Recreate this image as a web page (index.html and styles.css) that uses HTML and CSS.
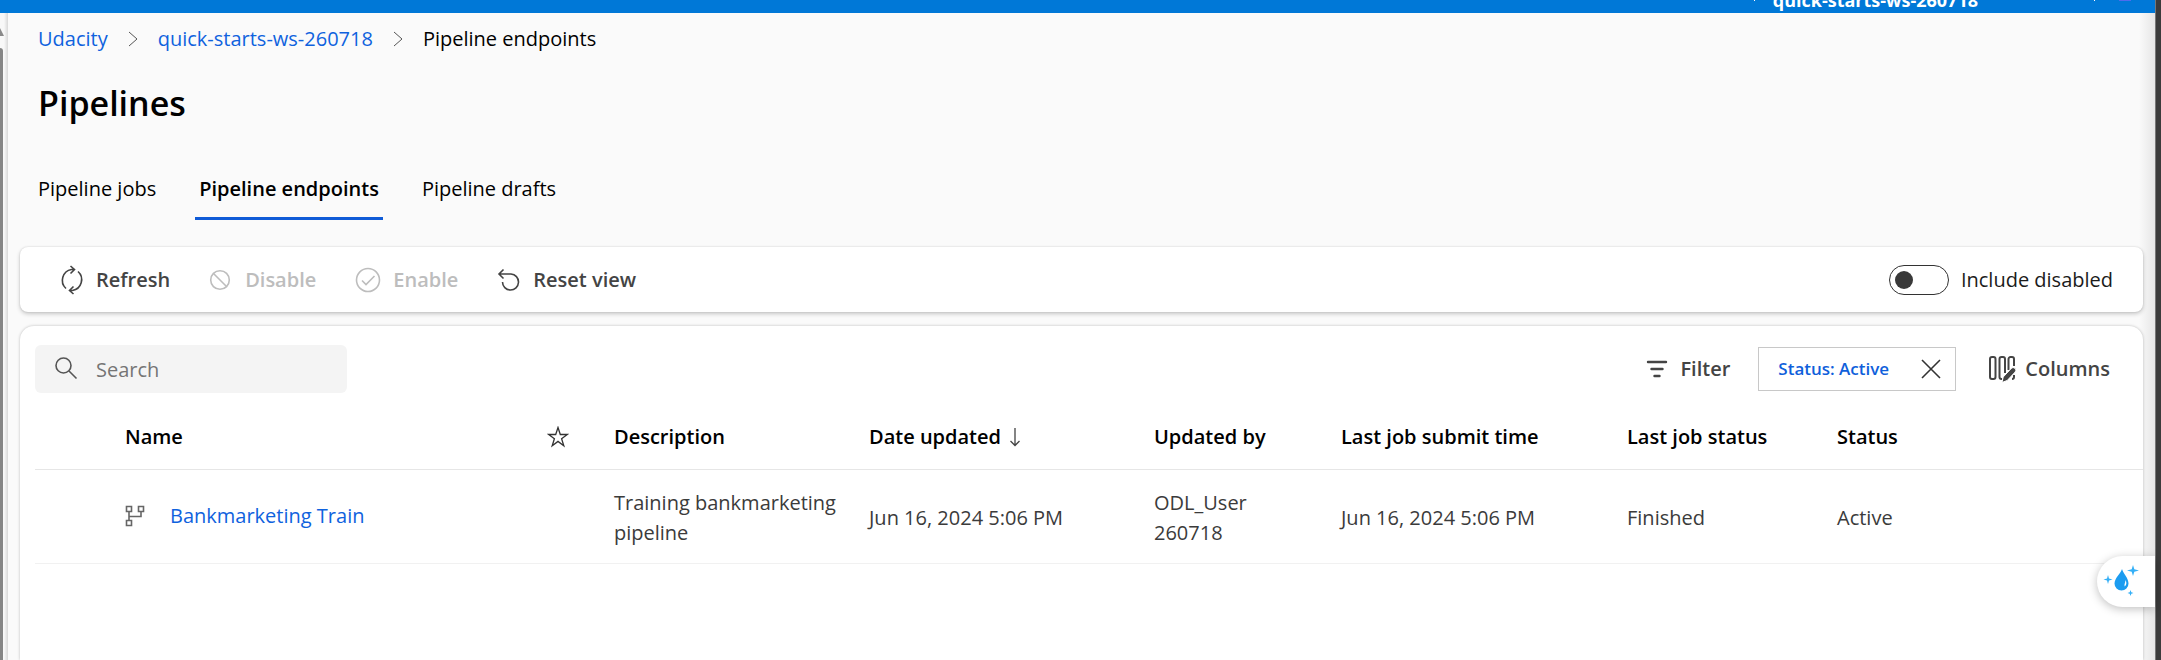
FILE: index.html
```html
<!DOCTYPE html>
<html lang="en">
<head>
<meta charset="utf-8">
<title>Pipelines</title>
<link rel="stylesheet" href="styles.css">
</head>
<body>
<div class="app">
  <header class="topbar">
    <span class="topbar-tick"></span>
    <span class="workspace">quick-starts-ws-260718</span>
    <span class="topbar-tick"></span>
    <span class="avatar"></span>
  </header>
  <div class="shell">
    <div class="rail">
      <span class="rail-arrow"></span>
      <span class="rail-thumb"></span>
    </div>
    <main class="content">
      <nav class="breadcrumb" aria-label="Breadcrumb">
        <a href="#">Udacity</a>
        <svg class="chevron" viewBox="0 0 10 16"><path d="M1 1l8 7-8 7"/></svg>
        <a href="#">quick-starts-ws-260718</a>
        <svg class="chevron" viewBox="0 0 10 16"><path d="M1 1l8 7-8 7"/></svg>
        <span>Pipeline endpoints</span>
      </nav>
      <h1>Pipelines</h1>
      <div class="tabs" role="tablist">
        <button class="tab" role="tab">Pipeline jobs</button>
        <button class="tab active" role="tab" aria-selected="true">Pipeline endpoints</button>
        <button class="tab" role="tab">Pipeline drafts</button>
      </div>
      <section class="card toolbar">
        <button class="cmd cmd-refresh">
          <svg width="26" height="30" viewBox="0 0 26 30"><path d="M7 23.500A11 11 0 0 1 12.500 4.500H15M11.500 1l4 3.500-4 4M19 6.500A11 11 0 0 1 13.500 25.500H11M14.500 29l-4-3.500 4-4"/></svg>
          Refresh
        </button>
        <button class="cmd cmd-disable" disabled>
          <svg width="22" height="22" viewBox="0 0 22 22"><circle cx="11" cy="11" r="9.300"/><path d="M4.500 4.500l13 13"/></svg>
          Disable
        </button>
        <button class="cmd cmd-enable" disabled>
          <svg width="26" height="26" viewBox="0 0 26 26"><circle cx="13" cy="13" r="11.500"/><path d="M7 13.500l4 4 8.500-8.500"/></svg>
          Enable
        </button>
        <button class="cmd cmd-reset">
          <svg width="24" height="24" viewBox="0 0 24 24"><path d="M6.500 1.500L2 6l4.500 4.500M2 6h12a8 8 0 1 1-8.500 8"/></svg>
          Reset view
        </button>
        <label class="toggle">
          <input type="checkbox" role="switch">
          Include disabled
        </label>
      </section>
      <section class="card list">
        <div class="list-bar">
          <label class="search">
            <svg width="24" height="24" viewBox="0 0 24 24"><circle cx="9.500" cy="8.500" r="7.500"/><path d="M15 14l7.500 7.500"/></svg>
            <input type="text" placeholder="Search" aria-label="Search">
          </label>
          <div class="list-actions">
            <button class="cmd cmd-filter">
              <svg width="22" height="18" viewBox="0 0 22 18"><path d="M2 2h18M5.500 9h11M8.500 16h5"/></svg>
              Filter
            </button>
            <div class="chip">
              <span>Status: Active</span>
              <button class="chip-close" aria-label="Remove filter">
                <svg width="20" height="20" viewBox="0 0 20 20"><path d="M1 1l18 18M19 1L1 19"/></svg>
              </button>
            </div>
            <button class="cmd cmd-columns">
              <svg width="28" height="28" viewBox="0 0 28 28"><rect x="2" y="2" width="5.500" height="22" rx="2"/><path d="M14 24h-.5a2 2 0 0 1-2-2V4a2 2 0 0 1 2-2H15a2 2 0 0 1 2 2v14M26 11V4a2 2 0 0 0-2-2h-1.500a2 2 0 0 0-2 2v11M26 20v2a2 2 0 0 1-2 2"/><path class="pencil" d="M14 27.500l1.200-5.500 8-8.500a2.500 2.500 0 0 1 4 3.500l-8 8.500z"/></svg>
              Columns
            </button>
          </div>
        </div>
        <table>
          <colgroup>
            <col class="c-pad"><col class="c-name"><col class="c-star"><col class="c-desc"><col class="c-date"><col class="c-by"><col class="c-submit"><col class="c-job"><col class="c-status">
          </colgroup>
          <thead>
            <tr>
              <th></th>
              <th>Name</th>
              <th aria-label="Favorite"><svg class="star" width="22" height="22" viewBox="0 0 22 22"><path d="M11 1.500l2.300 7h7l-5.700 4.200 2.200 7-5.800-4.300-5.800 4.300 2.200-7L1.700 8.500h7z"/></svg></th>
              <th>Description</th>
              <th><span class="sort">Date updated <svg width="12" height="20" viewBox="0 0 12 20"><path d="M6 1v17.500M1.500 14L6 18.500l4.500-4.500"/></svg></span></th>
              <th>Updated by</th>
              <th>Last job submit time</th>
              <th>Last job status</th>
              <th>Status</th>
            </tr>
          </thead>
          <tbody>
            <tr>
              <td></td>
              <td class="name-cell">
                <span class="name">
                  <svg width="20" height="22" viewBox="0 0 20 22"><path d="M1.500 1.500h5v5h-5zM13.500 1.500h5v5h-5zM1.500 15.500h5v5h-5zM4 7v8M4 11.500h12V7"/></svg>
                  <a href="#">Bankmarketing Train</a>
                </span>
              </td>
              <td></td>
              <td>Training bankmarketing pipeline</td>
              <td>Jun 16, 2024 5:06 PM</td>
              <td>ODL_User<br>260718</td>
              <td>Jun 16, 2024 5:06 PM</td>
              <td>Finished</td>
              <td>Active</td>
            </tr>
          </tbody>
        </table>
      </section>
    </main>
  </div>
  <button class="assistant" aria-label="Assistant">
    <svg width="38" height="34" viewBox="0 0 38 34"><path fill="#1c9cf0" d="M18 4c1 4 6.500 9 6.500 14.500a7 7 0 0 1-14 0C10.500 13 17 8 18 4z"/><path fill="#fff" d="M21.500 15c1.500 3 1 5-.8 6.500-.8-2 .6-3.500.8-6.500z"/><path fill="#35b0f7" d="M29 0l1.300 4.200 4.700 1.300-4.700 1.300L29 11l-1.300-4.200L23 5.500l4.700-1.300zM4 10l1 3.500 3.500 1L5 15.500 4 19l-1-3.500-3.500-1 3.500-1zM26.500 25l.8 2.200 2.200.8-2.200.8-.8 2.200-.8-2.200-2.200-.8 2.200-.8z"/></svg>
  </button>
</div>
<div class="edge"></div>
</body>
</html>
```
FILE: styles.css
```css
* { box-sizing: border-box; }

body {
  margin: 0;
  display: flex;
  height: 100vh;
  overflow: hidden;
  background: #fafafa;
  color: #000;
  font-family: "Segoe UI", "Open Sans", "Noto Sans", sans-serif;
  font-size: 20px;
  line-height: 30px;
}

button, input { font: inherit; color: inherit; }
button { border: 0; background: none; padding: 0; white-space: nowrap; }
a { color: #0f62de; text-decoration: none; }
svg { flex: none; fill: none; stroke: currentColor; stroke-width: 1.6; }

.app {
  position: relative;
  flex: 1;
  min-width: 0;
  display: flex;
  flex-direction: column;
}
.edge { width: 6px; background: #3b3b3b; border-left: 1px solid #777; }

.topbar {
  height: 13px;
  flex: none;
  overflow: hidden;
  display: flex;
  align-items: flex-end;
  justify-content: flex-end;
  padding: 0 24px 1px 0;
  background: #0078d7;
  color: #fff;
}
.workspace { font-size: 18px; font-weight: 700; line-height: 24px; margin: 0 116px 0 18px; }
.topbar-tick { width: 1px; height: 1px; background: #fff; align-self: flex-start; }
.avatar { width: 12px; height: 1px; margin-left: 24px; background: #4f6bed; align-self: flex-start; }

.shell { flex: 1; min-height: 0; display: flex; }
.rail {
  width: 8px;
  flex: none;
  display: flex;
  flex-direction: column;
  background: linear-gradient(to right, #f8f8f8 4px, #d8d8d8);
}
.rail-arrow { margin-top: 15px; border-left: 4px solid #8a8a8a; border-top: 8px solid transparent; }
.rail-thumb { flex: 1; width: 3px; margin-top: 12px; border-radius: 0 3px 0 0; background: #858585; }

.content {
  flex: 1;
  min-width: 0;
  display: flex;
  flex-direction: column;
  padding: 0 12px;
  background: linear-gradient(to left, #e6e6e6, #fafafa 16px);
}

.breadcrumb {
  display: flex;
  align-items: center;
  gap: 20px;
  padding: 11px 18px 0;
}
.chevron { width: 10px; height: 16px; stroke: #555; stroke-width: 1; }

h1 { margin: 24px 18px 0; font-size: 34px; font-weight: 600; line-height: 50px; }

.tabs { display: flex; gap: 35px; padding: 0 14px; margin-top: 40px; }
.tab { height: 52px; padding: 0 4px 8px; border-bottom: 3px solid transparent; }
.tab.active { font-weight: 600; border-color: #0f5bd7; }

.card { background: #fff; }
.toolbar {
  display: flex;
  align-items: center;
  height: 65px;
  margin-top: 27px;
  padding: 0 30px 0 39px;
  border-radius: 8px;
  box-shadow: 0 2px 4px rgba(0, 0, 0, 0.2), 0 0 2px rgba(0, 0, 0, 0.14);
}
.cmd { display: flex; align-items: center; gap: 12px; font-weight: 600; color: #444; }
.cmd:disabled { color: #bdbdbd; }
.cmd-refresh { gap: 11px; }
.cmd-disable, .cmd-enable, .cmd-reset { margin-left: 39px; }
.cmd-disable { gap: 14px; }

.toggle { display: flex; align-items: center; gap: 12px; margin-left: auto; color: #1b1b1b; }
.toggle input {
  appearance: none;
  width: 60px;
  height: 30px;
  margin: 0;
  padding: 5px;
  border: 1px solid #333;
  border-radius: 15px;
  background: #fff;
}
.toggle input::before {
  content: "";
  display: block;
  width: 18px;
  height: 18px;
  border-radius: 50%;
  background: #393939;
}
.toggle input:checked::before { margin-left: auto; }

.list {
  flex: 1;
  margin-top: 14px;
  padding: 19px 0 0 15px;
  border-radius: 14px 14px 0 0;
  box-shadow: 0 0 3px rgba(0, 0, 0, 0.25);
}
.list-bar { display: flex; align-items: center; justify-content: space-between; padding-right: 33px; }
.search {
  display: flex;
  align-items: center;
  gap: 18px;
  width: 312px;
  height: 48px;
  padding: 0 20px 0 19px;
  border-radius: 6px;
  background: #f4f4f4;
  color: #555;
}
.search input { flex: 1; min-width: 0; border: 0; padding: 2px 0 0; background: none; outline: 0; }
.search input::placeholder { color: #757575; opacity: 1; }

.list-actions { display: flex; align-items: center; }
.cmd-filter svg { stroke-width: 2.4; stroke-linecap: round; }
.chip {
  display: flex;
  align-items: center;
  justify-content: space-between;
  width: 198px;
  height: 44px;
  margin: 0 32px 0 28px;
  padding: 0 14px 0 19px;
  border: 1px solid #c8c8c8;
  color: #0f5fdb;
  font-size: 17px;
  font-weight: 600;
}
.chip-close { display: flex; color: #333; }
.cmd-columns { gap: 9px; }
.cmd-columns svg { stroke-width: 2; }
.cmd-columns .pencil { fill: #444; stroke: #fff; stroke-width: 1; }

table { width: 100%; table-layout: fixed; border-collapse: collapse; color: #3b3b3b; }
th, td { text-align: left; vertical-align: middle; }
th { height: 76px; padding: 27px 0 14px; font-weight: 600; color: #000; white-space: nowrap; }
td { height: 94px; padding: 4px 0 0; }
.name-cell { padding-top: 0; }
thead tr { border-bottom: 1px solid #e6e6e6; }
tbody tr { border-bottom: 1px solid #f1f1f1; }
.c-pad { width: 90px; }
.c-name { width: 422px; }
.c-star { width: 67px; }
.c-desc { width: 255px; }
.c-date { width: 285px; }
.c-by { width: 187px; }
.c-submit { width: 286px; }
.c-job { width: 210px; }
.star { display: block; stroke: #333; stroke-width: 1.3; }
.sort { display: flex; align-items: center; gap: 8px; }
.sort svg { stroke: #444; stroke-width: 1.3; }
.name { display: flex; align-items: center; gap: 25px; }
.name svg { color: #666; }

.assistant {
  position: absolute;
  right: 0;
  top: 556px;
  width: 58px;
  height: 51px;
  display: flex;
  align-items: center;
  padding-left: 7px;
  border-radius: 26px 0 0 26px;
  background: #fff;
  box-shadow: 0 2px 10px rgba(0, 0, 0, 0.25);
}
.assistant svg { stroke: none; overflow: visible; }
```
